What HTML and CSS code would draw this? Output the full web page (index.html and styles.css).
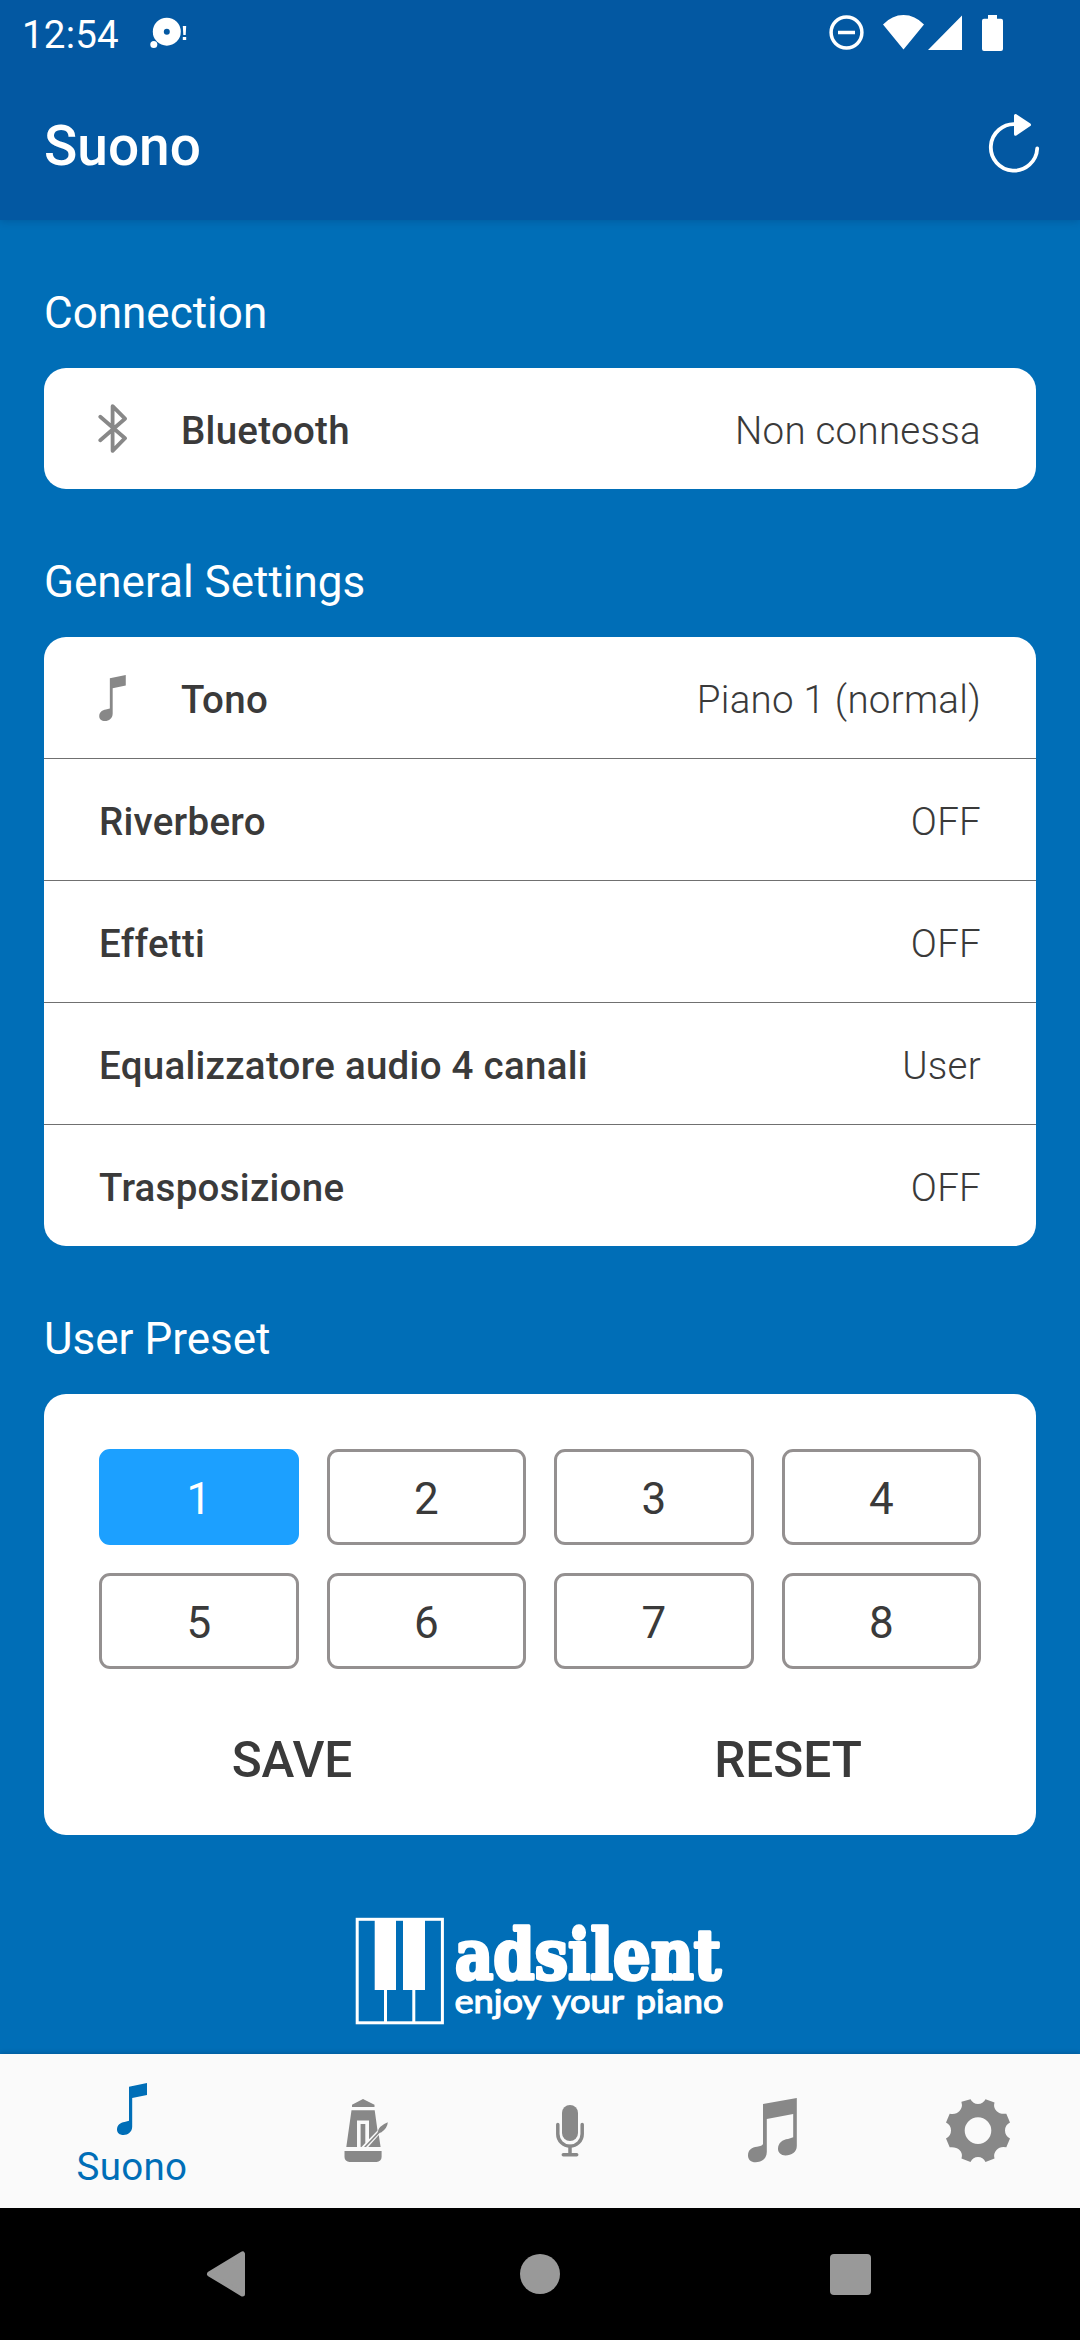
FILE: index.html
```html
<!DOCTYPE html>
<html lang="it">
<head>
<meta charset="utf-8">
<title>Suono</title>
<link rel="stylesheet" href="styles.css">
</head>
<body>
<div class="app">
  <header class="header">
    <div class="statusbar">
      <span class="clock">12:54</span>
      <svg class="notif" width="40" height="34" viewBox="149 16 40 34"><circle cx="166.8" cy="31.7" r="14"/><circle class="hole" cx="166.8" cy="31.7" r="3"/><circle cx="153.8" cy="44.6" r="3.5"/><path d="M182.8 26h3.4l-.5 9h-2.4zM182.8 37h3.4v3h-3.4z"/></svg>
      <div class="status-icons">
        <svg width="176" height="40" viewBox="828 12 176 40"><circle class="ring" cx="846.5" cy="32.5" r="15.4"/><path d="M838 30.700h17v3.500h-17zM903.500 49.500 883 24.500Q892 15 903.500 15T924 24.500zM962 15.500V50H928zM988 15h9v3.800h4a2 2 0 0 1 2 2V49a2 2 0 0 1-2 2h-17a2 2 0 0 1-2-2V20.800a2 2 0 0 1 2-2h4z"/></svg>
      </div>
    </div>
    <div class="toolbar">
      <h1 class="title">Suono</h1>
      <svg class="refresh" width="54" height="62" viewBox="987 112 54 62"><path class="arc" d="M1016 124.300A23.200 23.200 0 1 0 1037.200 148.500"/><path class="arrow" d="M1015.500 115.500V134.300L1029.500 124.800z"/></svg>
    </div>
  </header>

  <main class="content">
    <h2 class="section-title">Connection</h2>
    <section class="card">
      <div class="row">
        <svg class="row-icon bluetooth" width="30" height="54" viewBox="98 402 30 54"><path d="M100.300 416.800 125 438.200 112.600 450.800V406.200L125 418.700 100.300 440.200"/></svg>
        <span class="label">Bluetooth</span><span class="value">Non connessa</span>
      </div>
    </section>

    <h2 class="section-title">General Settings</h2>
    <section class="card">
      <div class="row">
        <svg class="row-icon note" width="27" height="46" viewBox="0 0 30 52"><path d="M12 3.700 30 0V12L15.200 15V43.500C15.200 49 11 52 6.500 52 2.500 52 0 49.800 0 46.500 0 42 3.500 39.500 7.500 39L12 37.800z"/></svg>
        <span class="label">Tono</span><span class="value">Piano 1 (normal)</span>
      </div>
      <div class="row"><span class="label">Riverbero</span><span class="value">OFF</span></div>
      <div class="row"><span class="label">Effetti</span><span class="value">OFF</span></div>
      <div class="row"><span class="label">Equalizzatore audio 4 canali</span><span class="value">User</span></div>
      <div class="row"><span class="label">Trasposizione</span><span class="value">OFF</span></div>
    </section>

    <h2 class="section-title">User Preset</h2>
    <section class="card preset-card">
      <div class="presets">
        <button class="preset selected">1</button><button class="preset">2</button><button class="preset">3</button><button class="preset">4</button>
        <button class="preset">5</button><button class="preset">6</button><button class="preset">7</button><button class="preset">8</button>
      </div>
      <div class="actions"><button class="action">SAVE</button><button class="action">RESET</button></div>
    </section>

    <div class="brand">
      <svg width="380" height="130" viewBox="355 1902 380 130">
        <rect class="frame" x="357.200" y="1919.300" width="85.200" height="103.500"/>
        <path class="keys" d="M374.700 1919h21.300v71h-21.300zM403 1919h22v71h-22zM384 1989h3v34h-3zM412.300 1989h3v34h-3z"/>
        <text class="brand-name" x="455" y="1978.500" textLength="266" lengthAdjust="spacingAndGlyphs">adsilent</text>
        <text class="brand-tag" x="454.500" y="2013.200" textLength="269" lengthAdjust="spacingAndGlyphs">enjoy your piano</text>
      </svg>
    </div>
  </main>

  <nav class="tabs">
    <a class="tab active">
      <svg width="30" height="52" viewBox="0 0 30 52"><path d="M12 3.700 30 0V12L15.200 15V43.500C15.200 49 11 52 6.500 52 2.500 52 0 49.800 0 46.500 0 42 3.500 39.500 7.500 39L12 37.800z"/></svg>
      <span>Suono</span>
    </a>
    <a class="tab">
      <svg width="66" height="66" viewBox="333 2098 66 66"><path d="M352 2104.800 363 2099 374.500 2104.800V2107H352zM351.500 2110.300H374.700L377.500 2130.500 369 2139.200V2120.500H357V2147H346.300zM360.600 2124H365.300V2143L361.500 2147H360.600zM378.800 2135 380.600 2147H368.200zM344.500 2151H381.600V2157a5 5 0 0 1-5 5H349.500a5 5 0 0 1-5-5z"/><path d="M364 2147 377.500 2132.500Q378.500 2126 387.800 2122.300 387.500 2128 381.500 2132.200L379.500 2133 366 2147z"/></svg>
    </a>
    <a class="tab">
      <svg width="66" height="66" viewBox="537 2098 66 66"><rect x="562" y="2105" width="16" height="36" rx="8"/><path class="mic-stand" d="M557.800 2124.500V2134a12.200 12.200 0 0 0 24.400 0V2124.500M570 2146V2154M563.300 2154.700H576.700"/></svg>
    </a>
    <a class="tab">
      <svg width="66" height="66" viewBox="741 2098 66 66"><path d="M763 2104 796.800 2098V2146C796.800 2152 791.500 2155.500 785.500 2155.500 781 2155.500 778 2152.500 778 2149 778 2143 782.500 2139.500 788 2139L793.200 2137.300V2114L766.800 2119V2152C766.800 2159 761 2162.300 755.500 2162.300 751 2162.300 748 2159.700 748 2155.500 748 2149.500 752 2147.500 757 2146.700 760 2146.300 763 2145.500 763 2143.500z"/></svg>
    </a>
    <a class="tab">
      <svg width="66" height="66" viewBox="945 2098 66 66"><path fill-rule="evenodd" d="M961.500 2101.800 970.500 2099.200Q973 2104 978 2104T985.500 2099.200L994.500 2102.500Q993 2107.500 996.500 2111T1006.300 2113.700L1010 2122.500Q1005 2125 1005 2130.500T1010 2138.500L1006.300 2147.300Q1000 2146 996.500 2150T994.500 2158.500L985.500 2162Q983 2157 978 2157T970.500 2162L961.500 2158.500Q963 2153.500 959.500 2150T949.700 2147.300L946 2138.500Q951 2136 951 2130.500T946 2122.500L949.700 2113.700Q956 2115 959.500 2111T961.500 2102.500zM978 2117.300a13.300 13.300 0 1 0 0 26.600a13.300 13.300 0 1 0 0-26.600z"/></svg>
    </a>
  </nav>

  <div class="sysnav">
    <svg width="40" height="46" viewBox="0 0 40 46"><path d="M36.500 3V43L3.500 23z"/></svg>
    <span class="home"></span>
    <span class="recents"></span>
  </div>
</div>
</body>
</html>
```
FILE: styles.css
```css
* { box-sizing: border-box; }
body { margin: 0; font-family: Roboto, "Noto Sans", sans-serif; }
button { border: 0; background: none; padding: 0; font: inherit; color: inherit; }
h1, h2 { margin: 0; font-weight: 400; }
svg { display: block; flex: none; }

.app { width: 1080px; height: 2340px; display: flex; flex-direction: column; background: #006eb7; overflow: hidden; }

.header { height: 220px; background: #0358a2; color: #fff; box-shadow: 0 1px 8px rgba(0, 40, 90, .28); }
.statusbar { height: 66px; display: flex; align-items: flex-start; padding: 12px 76px 0 22px; }
.statusbar svg { fill: #fff; }
.clock { font-size: 38.500px; line-height: 45px; width: 127px; letter-spacing: .2px; }
.notif { margin-top: 4px; }
.notif .hole { fill: #0358a2; }
.status-icons { margin-left: auto; }
.ring { fill: none; stroke: #fff; stroke-width: 3.500px; }
.toolbar { height: 154px; display: flex; align-items: center; justify-content: space-between; padding: 6px 39px 0 44px; }
.title { font-size: 55px; font-weight: 500; line-height: 64px; }
.refresh { margin-bottom: 6px; }
.arc { fill: none; stroke: #fff; stroke-width: 3.800px; stroke-linecap: round; }
.arrow { fill: #fff; stroke: #fff; stroke-width: 3px; stroke-linejoin: round; }

.content { flex: 1; padding: 0 44px; }
.section-title { height: 148px; padding-top: 38px; display: flex; align-items: center; color: #fff; font-size: 44px; line-height: 52px; }
.card { background: #fff; border-radius: 22px; color: #3a3a3a; }
.row { height: 122px; padding: 4px 55px 0; display: flex; align-items: center; font-size: 38.500px; letter-spacing: .27px; border-bottom: 1px solid #707070; }
.row:last-child { height: 121px; border-bottom: 0; }
.label { font-weight: 500; }
.value { margin-left: auto; font-weight: 300; }
.bluetooth { margin: 0 53px 4px -1px; fill: none; stroke: #888; stroke-width: 3.800px; stroke-linecap: round; stroke-linejoin: round; }
.note { margin: 0 55px 4px 0; fill: #888; }

.preset-card { height: 441px; padding-top: 55px; }
.presets { display: grid; grid-template-columns: repeat(4, 1fr); grid-auto-rows: 96px; gap: 28px; padding: 0 55px; }
.preset { border: 3px solid #949090; border-radius: 11px; font-size: 44px; padding-top: 3px; }
.preset.selected { background: #1ca0ff; border-color: #1ca0ff; color: #fff; }
.actions { height: 166px; display: grid; grid-template-columns: 1fr 1fr; padding-top: 16px; }
.action { font-size: 49.500px; font-weight: 500; }

.brand { display: flex; padding: 67px 0 0 311px; }
.frame { fill: none; stroke: #fff; stroke-width: 3px; }
.keys { fill: #fff; }
.brand-name { fill: #fff; stroke: #fff; stroke-width: 3.600px; stroke-linejoin: round; font: bold 69px "DejaVu Serif", serif; }
.brand-tag { fill: #fff; stroke: #fff; stroke-width: 1.100px; font: 400 33px Lato, sans-serif; word-spacing: 3px; }

.tabs { height: 154px; display: grid; grid-template-columns: 264px repeat(4, 204px); background: #fafafa; box-shadow: 0 -1px 4px rgba(0, 30, 70, .25); }
.tab { display: flex; flex-direction: column; align-items: center; justify-content: center; fill: #888; color: #006eb7; font-size: 38.500px; line-height: 45px; letter-spacing: .3px; }
.tab.active { fill: #006eb7; justify-content: flex-start; padding-top: 29px; gap: 9px; }
.mic-stand { fill: none; stroke: #888; stroke-width: 3.500px; stroke-linecap: round; }

.sysnav { height: 132px; background: #000; display: flex; align-items: center; justify-content: space-between; padding: 0 209px 0 206px; }
.sysnav svg { fill: #999; stroke: #999; stroke-width: 5px; stroke-linejoin: round; }
.home { width: 40px; height: 40px; margin-left: 4px; border-radius: 50%; background: #999; }
.recents { width: 41px; height: 41px; border-radius: 4px; background: #999; }
```
